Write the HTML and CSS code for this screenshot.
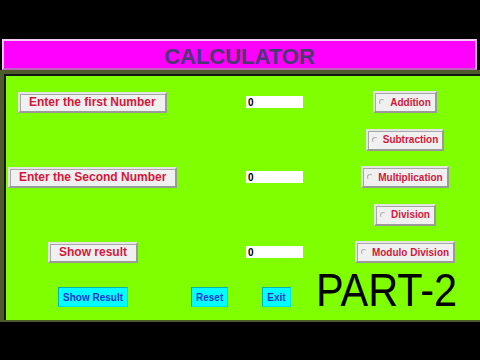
FILE: index.html
```html
<!DOCTYPE html>
<html lang="en">
<head>
    <meta charset="UTF-8">
    <title>Calculator</title>
    <link rel="stylesheet" href="styles.css">
</head>
<body>
    <div class="window">
        <div class="title-bar">CALCULATOR</div>

        <div class="frame">
            <div class="panel">
                <div class="form-grid">
                    <div class="label-btn first r1">Enter the first Number</div>
                    <input type="text" class="num-input r1" value="0">
                    <label class="op r1"><span class="radio"></span>Addition</label>

                    <label class="op r2"><span class="radio"></span>Subtraction</label>

                    <div class="label-btn second r3">Enter the Second Number</div>
                    <input type="text" class="num-input r3" value="0">
                    <label class="op r3"><span class="radio"></span>Multiplication</label>

                    <label class="op r4"><span class="radio"></span>Division</label>

                    <div class="label-btn result r5">Show result</div>
                    <input type="text" class="num-input r5" value="0">
                    <label class="op r5"><span class="radio"></span>Modulo Division</label>
                </div>

                <div class="bottom-row">
                    <button class="action show">Show Result</button>
                    <button class="action reset">Reset</button>
                    <button class="action exit">Exit</button>
                    <div class="part">PART-2</div>
                </div>
            </div>
        </div>
    </div>
</body>
</html>
```

FILE: styles.css
```css
* {
    margin: 0;
    padding: 0;
    box-sizing: border-box;
}

body {
    width: 480px;
    height: 360px;
    overflow: hidden;
    background-color: #000;
    font-family: "Liberation Sans", Arial, sans-serif;
}

.window {
    padding-top: 39px;
}

.title-bar {
    height: 31px;
    margin: 0 3px 0 2px;
    padding-top: 4px;
    border: 2px solid;
    border-color: #f8c8f8 #e0a8e0 #c060c0 #f8c8f8;
    background-color: #ff00ff;
    color: #4a3a72;
    font-size: 22px;
    font-weight: bold;
    line-height: 23px;
    text-align: center;
}

.frame {
    background-color: #4d5c2a;
    padding: 4px 0 2px 4px;
}

.panel {
    height: 246px;
    border-top: 2px solid #151515;
    border-left: 2px solid #151515;
    background-color: #80ff00;
    padding-top: 15px;
}

.form-grid {
    display: grid;
    grid-template-columns: 240px 84px 150px;
    grid-template-rows: repeat(5, 22px);
    row-gap: 15.5px;
    align-items: center;
}

.r1 { grid-row: 1; }
.r2 { grid-row: 2; }
.r3 { grid-row: 3; }
.r4 { grid-row: 4; }
.r5 { grid-row: 5; }

.label-btn {
    grid-column: 1;
    justify-self: start;
    height: 21px;
    padding: 0 9px;
    border: 2px solid;
    border-color: #e4e4e4 #9a9a9a #9a9a9a #e4e4e4;
    box-shadow: inset 1px 1px 0 #a8a8a8;
    background-color: #f0f0f0;
    color: #d4163c;
    font-size: 12px;
    font-weight: bold;
    line-height: 17px;
    white-space: nowrap;
}

.first { margin-left: 12px; }
.second { margin-left: 2px; }
.result { margin-left: 42px; }

.num-input {
    grid-column: 2;
    width: 57px;
    height: 12px;
    border: none;
    outline: none;
    padding-left: 2px;
    background-color: #fff;
    color: #000;
    font-family: "Liberation Sans", Arial, sans-serif;
    font-size: 10px;
    font-weight: bold;
}

.op {
    grid-column: 3;
    justify-self: center;
    display: flex;
    align-items: center;
    gap: 5px;
    height: 22px;
    padding: 0 4px;
    border: 2px solid;
    border-color: #e4e4e4 #9a9a9a #9a9a9a #e4e4e4;
    box-shadow: inset 1px 1px 0 #a8a8a8;
    background-color: #f0f0f0;
    color: #d4163c;
    font-size: 10px;
    font-weight: bold;
    white-space: nowrap;
}

.radio {
    width: 6px;
    height: 6px;
    border-radius: 50%;
    border: 1px solid #b0b0b0;
    border-right-color: #f0f0f0;
    border-bottom-color: #f0f0f0;
}

.bottom-row {
    display: flex;
    align-items: flex-start;
    margin-top: 4px;
}

.action {
    height: 20px;
    margin-top: 20px;
    padding: 0 4px;
    border: 1px solid;
    border-color: #00b4b4 #00e0e0 #00e0e0 #00b4b4;
    background-color: #00ffff;
    color: #1a36d0;
    font-family: "Liberation Sans", Arial, sans-serif;
    font-size: 10px;
    font-weight: bold;
}

.show { margin-left: 52px; }
.reset { margin-left: 63px; }
.exit { margin-left: 34px; }

.part {
    margin-left: 25px;
    color: #000;
    font-size: 46px;
    line-height: 46px;
    white-space: nowrap;
    transform: scaleX(0.9);
    transform-origin: left;
}
```
